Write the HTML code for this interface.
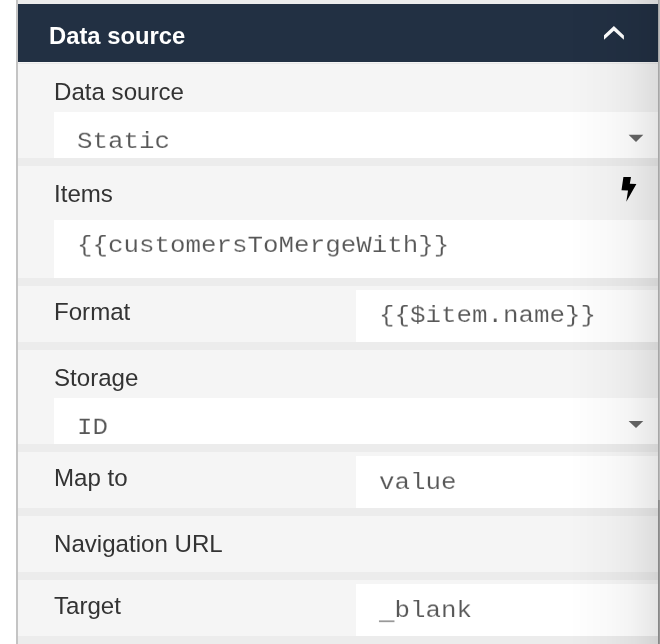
<!DOCTYPE html>
<html>
<head>
<meta charset="utf-8">
<style>
html,body{margin:0;padding:0;}
body{width:660px;height:644px;position:relative;overflow:hidden;background:#fff;font-family:"Liberation Sans",sans-serif;}
.abs{position:absolute;}
.lbl,.htitle,.mono{will-change:transform;}
#lborder{left:16px;top:0;width:2px;height:644px;background:#c4c4c4;}
#rborder{left:658px;top:0;width:1px;height:500px;background:#a6a6a6;}
#rborder2{left:659px;top:0;width:1px;height:500px;background:#bababa;}
#rborder3{left:658px;top:500px;width:1px;height:144px;background:#888;}
#rborder4{left:659px;top:500px;width:1px;height:144px;background:#979797;}
#panel{left:18px;top:0;width:640px;height:644px;background:#ececec;}
#header{left:18px;top:4px;width:640px;height:58px;background:#223043;}
.htitle{left:49px;top:21px;font-size:23.8px;font-weight:bold;color:#fff;line-height:30px;white-space:nowrap;}
.row{left:18px;width:640px;background:#f5f5f5;}
.lbl{left:54px;font-size:24.1px;color:#333;line-height:30px;white-space:nowrap;}
.inp{background:#fff;}
.mono{font-family:"Liberation Mono",monospace;font-size:25.85px;color:#575757;line-height:30px;white-space:nowrap;transform:scaleY(0.9);-webkit-text-stroke:0.15px #fff;transform-origin:0 22px;}
#shade{left:570px;top:0;width:88px;height:644px;background:linear-gradient(to right,rgba(0,0,0,0) 0px,rgba(0,0,0,0.01) 20px,rgba(0,0,0,0.025) 40px,rgba(0,0,0,0.045) 60px,rgba(0,0,0,0.075) 76px,rgba(0,0,0,0.1) 88px);}
</style>
</head>
<body>
<div class="abs" id="panel"></div>
<div class="abs" id="header"></div>
<div class="abs htitle">Data source</div>
<svg class="abs" style="left:0;top:0" width="660" height="644">
  <polygon points="604,35.3 613.9,25.9 623.9,35.5 623.9,39.8 613.9,30.8 604,39.8" fill="#fff"/>
</svg>

<!-- Row 1: Data source 63-158 -->
<div class="abs row" style="top:62px;height:96px;"></div>
<div class="abs" style="left:18px;top:63px;width:640px;height:1px;background:#e9e9e9;"></div>
<div class="abs lbl" style="top:77px;">Data source</div>
<div class="abs inp" style="left:54px;top:112px;width:604px;height:46px;"></div>
<div class="abs mono" style="left:77px;top:126px;">Static</div>

<!-- Row 2: Items 166-278 -->
<div class="abs row" style="top:166px;height:112px;"></div>
<div class="abs lbl" style="top:179px;">Items</div>
<div class="abs inp" style="left:54px;top:220px;width:604px;height:58px;"></div>
<div class="abs mono" style="left:77px;top:230px;">{{customersToMergeWith}}</div>

<!-- Row 3: Format 286-342 -->
<div class="abs row" style="top:286px;height:56px;"></div>
<div class="abs lbl" style="top:297px;">Format</div>
<div class="abs inp" style="left:356px;top:290px;width:302px;height:52px;"></div>
<div class="abs mono" style="left:379px;top:300px;">{{$item.name}}</div>

<!-- Row 4: Storage 350-444 -->
<div class="abs row" style="top:350px;height:94px;"></div>
<div class="abs lbl" style="top:363px;">Storage</div>
<div class="abs inp" style="left:54px;top:398px;width:604px;height:46px;"></div>
<div class="abs mono" style="left:76.5px;top:412px;">ID</div>

<!-- Row 5: Map to 452-508 -->
<div class="abs row" style="top:452px;height:56px;"></div>
<div class="abs lbl" style="top:463px;">Map to</div>
<div class="abs inp" style="left:356px;top:456px;width:302px;height:52px;"></div>
<div class="abs mono" style="left:378.5px;top:467px;">value</div>

<!-- Row 6: Navigation URL 516-572 -->
<div class="abs row" style="top:516px;height:56px;"></div>
<div class="abs lbl" style="top:529px;">Navigation URL</div>

<!-- Row 7: Target 580-636 -->
<div class="abs row" style="top:580px;height:56px;"></div>
<div class="abs lbl" style="top:591px;">Target</div>
<div class="abs inp" style="left:356px;top:584px;width:302px;height:52px;"></div>
<div class="abs mono" style="left:379px;top:595px;"><span style="position:relative;top:2px;">_</span>blank</div>

<svg class="abs" style="left:0;top:0" width="660" height="644">
  <polygon points="628.6,134.8 643.3,134.8 636,142" fill="#666"/>
  <polygon points="628.6,420.9 643.3,420.9 636,427.9" fill="#666"/>
  <polygon points="623.4,177 631,177 629.8,183.7 636.4,184 626.3,201.7 628,190.5 621.5,190.2" fill="#000"/>
</svg>

<div class="abs" id="shade"></div>
<div class="abs" id="lborder"></div>
<div class="abs" id="rborder"></div>
<div class="abs" id="rborder2"></div>
<div class="abs" id="rborder3"></div>
<div class="abs" id="rborder4"></div>
</body>
</html>
